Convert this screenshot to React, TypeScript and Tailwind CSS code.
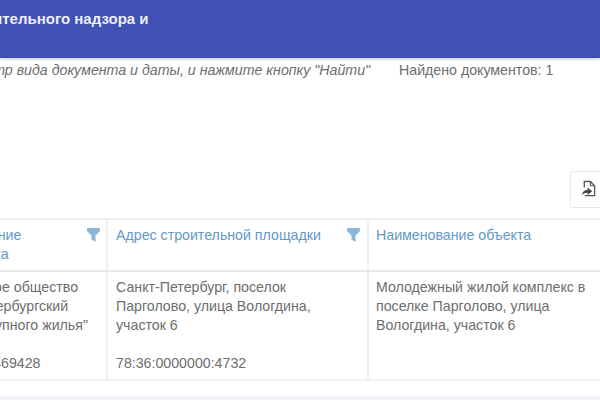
export default function App() {
  const Funnel = () => (
    <svg viewBox="0 0 13 14" className="w-[13px] h-[14px] shrink-0 mt-[2px]" fill="#8ab6dc">
      <path d="M0 0h13v3L8.5 7.5V14L4.5 11.5V7.5L0 3z" />
    </svg>
  );
  return (
    <div className="relative w-[600px] h-[400px] overflow-hidden bg-white font-['Liberation_Sans',Arial,sans-serif] text-[14.2px] text-[#6e6e6e]">
      <header className="h-[58px] bg-[#3f51b5] shadow-[0_1px_3px_rgba(0,0,0,0.25)] flex">
        <div className="-ml-[41px] mt-[10px] text-[15px] leading-[18px] font-bold text-[#eceef8] whitespace-nowrap">строительного надзора и</div>
      </header>
      <div className="flex h-[22px] pt-[2px] items-center whitespace-nowrap">
        <span className="-ml-[42px] italic w-[441px] shrink-0 leading-[19px]">фильтр вида документа и даты, и нажмите кнопку "Найти"</span>
        <span className="leading-[19px]">Найдено документов: 1</span>
      </div>
      <div className="flex justify-end mt-[91px] h-[47px]">
        <div className="w-[36px] h-[37px] -mr-[6px] border border-[#e8e8e8] rounded-[2px] flex items-start pl-[10px] pt-[8px]">
          <svg viewBox="0 0 16 18" className="w-[15px] h-[17px]" fill="none">
            <path d="M3.5 8V1.5H10L14.5 6V16.5H4" stroke="#555" strokeWidth="1.4" />
            <path d="M10 1.5V6h4.5" stroke="#555" strokeWidth="1.2" />
            <path d="M1 16c.4-3.5 2.6-5.5 6-5.7V8l5 4-5 4v-2.6c-2.6 0-4.4.7-6 2.6z" fill="#444" />
          </svg>
        </div>
      </div>
      <div className="w-[722px] -ml-[120px] border-y-2 border-[#eef0f3]">
        <div className="grid grid-cols-[228px_261px_233px] border-b-2 border-[#e6e8eb] text-[#6399c9] leading-[19px]">
          <div className="h-[50px] pt-[6px] pl-[43px] pr-[6px] flex justify-between border-r-2 border-[#eef0f3]">
            <span className="w-[150px]">Наименование<br />застройщика</span>
            <Funnel />
          </div>
          <div className="h-[50px] pt-[6px] pl-[8px] pr-[7px] flex justify-between border-r-2 border-[#eef0f3]">
            <span>Адрес строительной площадки</span>
            <Funnel />
          </div>
          <div className="h-[50px] pt-[6px] pl-[7px]">Наименование объекта</div>
        </div>
        <div className="grid grid-cols-[228px_261px_233px] leading-[18.9px]">
          <div className="h-[107px] pt-[6px] pl-[43px] border-r-2 border-[#eef0f3] whitespace-nowrap">
            Акционерное общество<br />"Санкт-Петербургский<br />центр доступного жилья"<br /><br />ИНН: 7841469428
          </div>
          <div className="h-[107px] pt-[6px] pl-[8px] border-r-2 border-[#eef0f3]">
            Санкт-Петербург, поселок<br />Парголово, улица Вологдина,<br />участок 6<br /><br />78:36:0000000:4732
          </div>
          <div className="h-[107px] pt-[6px] pl-[7px] whitespace-nowrap">
            Молодежный жилой комплекс в<br />поселке Парголово, улица<br />Вологдина, участок 6
          </div>
        </div>
      </div>
      <div className="mt-[15px] h-[6px] bg-[#eef1f6]" />
    </div>
  );
}
